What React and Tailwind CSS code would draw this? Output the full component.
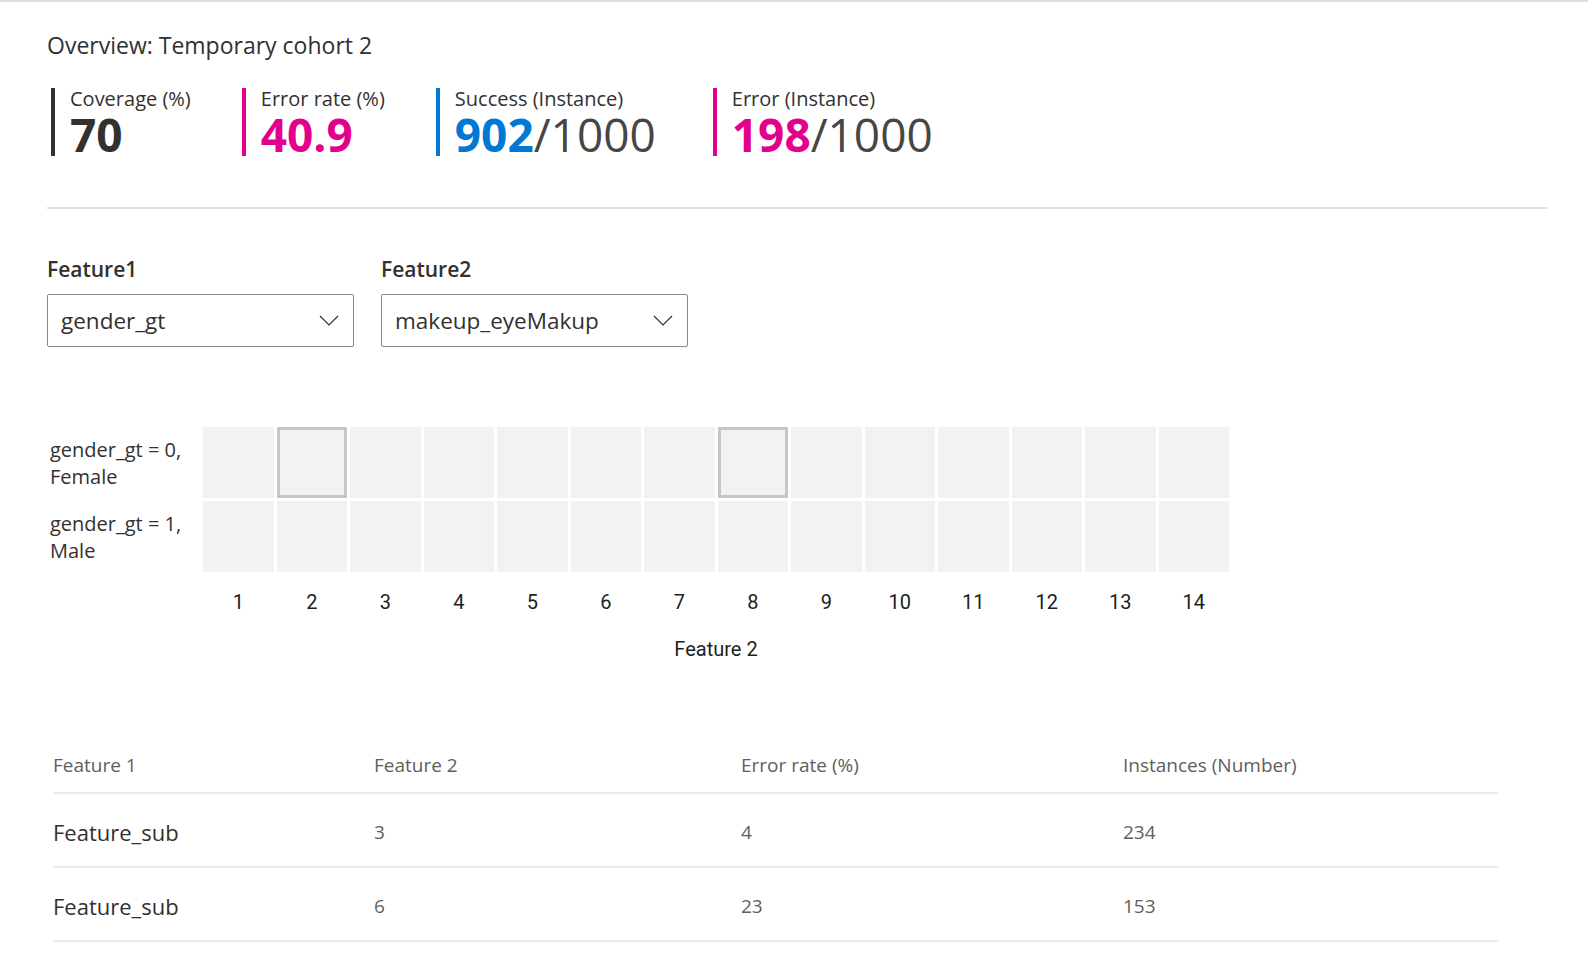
import React from "react"

const metrics = [
  { label: "Coverage (%)", value: "70", color: "border-[#323130]", valueColor: "text-[#323130]", gap: "mr-[51px]" },
  { label: "Error rate (%)", value: "40.9", color: "border-[#e3008c]", valueColor: "text-[#e3008c]", gap: "mr-[51px]" },
  { label: "Success (Instance)", value: "902", total: "/1000", color: "border-[#0078d4]", valueColor: "text-[#0078d4]", gap: "mr-[57px]" },
  { label: "Error (Instance)", value: "198", total: "/1000", color: "border-[#e3008c]", valueColor: "text-[#e3008c]", gap: "mr-[51px]" },
]

const rows = [
  { label1: "gender_gt = 0,", label2: "Female", selected: [2, 8] },
  { label1: "gender_gt = 1,", label2: "Male", selected: [] },
]

const cols = [1, 2, 3, 4, 5, 6, 7, 8, 9, 10, 11, 12, 13, 14]

const tableRows = [
  { f1: "Feature_sub", f2: "3", err: "4", inst: "234" },
  { f1: "Feature_sub", f2: "6", err: "23", inst: "153" },
]

function Chevron() {
  return (
    <svg width="20" height="11" viewBox="0 0 20 11" fill="none">
      <path d="M1 1 L10 10 L19 1" stroke="#323130" strokeWidth="1.2" />
    </svg>
  )
}

function Dropdown({ label, value }) {
  return (
    <div className="flex flex-col">
      <div className="text-[21px] font-semibold leading-[26px] text-[#323130]">{label}</div>
      <div className="mt-[12px] flex h-[53px] w-[307px] items-center justify-between rounded-[2px] border border-[#8a8886] pl-[13px] pr-[14px]">
        <span className="text-[22.5px] text-[#323130]">{value}</span>
        <Chevron />
      </div>
    </div>
  )
}

function App() {
  return (
    <div
      className="min-h-screen w-full border-t-2 border-[#e1dfdd] bg-white"
      style={{ fontFamily: '"Open Sans", "Noto Sans", sans-serif' }}
    >
      <div className="pl-[47px] pr-[41px]">
        <div className="pt-[29px] text-[23px] leading-[28px] text-[#323130]">
          Overview: Temporary cohort 2
        </div>

        <div className="ml-[4px] mt-[29px] flex flex-row">
          {metrics.map((m) => (
            <div key={m.label} className={"flex flex-col border-l-4 pl-[15px] " + m.color + " " + m.gap}>
              <div className="pt-[1px] text-[20px] leading-[20px] text-[#323130]">{m.label}</div>
              <div className="pt-[4px] text-[46px] leading-[43px]">
                <span className={"font-bold " + m.valueColor}>{m.value}</span>
                {m.total && <span className="text-[#484644]">{m.total}</span>}
              </div>
            </div>
          ))}
        </div>

        <div className="mt-[51px] h-[2px] bg-[#e1dfdd]"></div>

        <div className="mt-[47px] flex flex-row gap-[27px]">
          <Dropdown label="Feature1" value="gender_gt" />
          <Dropdown label="Feature2" value="makeup_eyeMakup" />
        </div>

        <div className="mt-[80px] flex flex-row">
          <div className="flex w-[156px] flex-col gap-[3px]">
            {rows.map((r) => (
              <div key={r.label1} className="flex h-[71px] flex-col justify-center pl-[3px] text-[20px] leading-[27px] text-[#323130]">
                <span>{r.label1}</span>
                <span>{r.label2}</span>
              </div>
            ))}
          </div>
          <div className="flex flex-col">
            <div className="flex flex-col gap-[3px]">
              {rows.map((r) => (
                <div key={r.label1} className="flex flex-row gap-[3px]">
                  {cols.map((c) => (
                    <div
                      key={c}
                      className={
                        r.selected.includes(c)
                          ? "h-[71px] w-[70.5px] border-[3px] border-[#c8c6c4] bg-[#f3f2f1]"
                          : "h-[71px] w-[70.5px] bg-[#f3f2f1]"
                      }
                    ></div>
                  ))}
                </div>
              ))}
            </div>
            <div className="mt-[18px] flex flex-row gap-[3px]" style={{ fontFamily: "Roboto, sans-serif" }}>
              {cols.map((c) => (
                <div key={c} className="w-[70.5px] text-center text-[20px] leading-[24px] text-[#201f1e]">
                  {c}
                </div>
              ))}
            </div>
            <div className="mt-[23px] text-center text-[20px] leading-[24px] text-[#201f1e]" style={{ fontFamily: "Roboto, sans-serif" }}>
              Feature 2
            </div>
          </div>
        </div>

        <div className="ml-[6px] mt-[78px] w-[1445px]">
          <div className="grid h-[55px] grid-cols-[321px_367px_382px_375px] items-center border-b-2 border-[#edebe9] text-[19px] text-[#605e5c]">
            <div>Feature 1</div>
            <div>Feature 2</div>
            <div>Error rate (%)</div>
            <div>Instances (Number)</div>
          </div>
          {tableRows.map((t, i) => (
            <div key={i} className="grid h-[74px] grid-cols-[321px_367px_382px_375px] items-center border-b-2 border-[#edebe9] pt-[4px] text-[19px] text-[#605e5c]">
              <div className="text-[22px] text-[#323130]">{t.f1}</div>
              <div>{t.f2}</div>
              <div>{t.err}</div>
              <div>{t.inst}</div>
            </div>
          ))}
        </div>
      </div>
    </div>
  )
}

export default App
